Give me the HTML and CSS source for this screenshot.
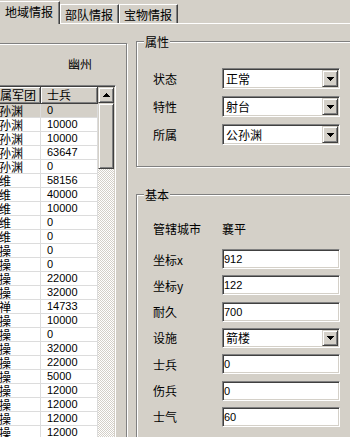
FILE: index.html
```html
<!DOCTYPE html>
<html lang="zh-CN">

<head>
    <meta charset="UTF-8">
    <title>地域情报</title>
    <link rel="stylesheet" href="styles.css">
</head>

<body>

    <div class="tabs">
        <div class="tab active">地域情报</div>
        <div class="tab">部队情报</div>
        <div class="tab">宝物情报</div>
    </div>

    <div class="panel">
        <div class="group region">
            <div class="region-name">幽州</div>
            <div class="list">
                <div class="list-main">
                    <div class="list-head">
                        <div class="col-army">所属军团</div>
                        <div class="col-troops">士兵</div>
                    </div>
                    <div class="list-row selected"><div class="col-army">公孙渊</div><div class="col-troops">0</div></div>
                    <div class="list-row"><div class="col-army">公孙渊</div><div class="col-troops">10000</div></div>
                    <div class="list-row"><div class="col-army">公孙渊</div><div class="col-troops">10000</div></div>
                    <div class="list-row"><div class="col-army">公孙渊</div><div class="col-troops">63647</div></div>
                    <div class="list-row"><div class="col-army">公孙渊</div><div class="col-troops">0</div></div>
                    <div class="list-row"><div class="col-army">姜维</div><div class="col-troops">58156</div></div>
                    <div class="list-row"><div class="col-army">姜维</div><div class="col-troops">40000</div></div>
                    <div class="list-row"><div class="col-army">姜维</div><div class="col-troops">10000</div></div>
                    <div class="list-row"><div class="col-army">姜维</div><div class="col-troops">0</div></div>
                    <div class="list-row"><div class="col-army">姜维</div><div class="col-troops">0</div></div>
                    <div class="list-row"><div class="col-army">曹操</div><div class="col-troops">0</div></div>
                    <div class="list-row"><div class="col-army">曹操</div><div class="col-troops">0</div></div>
                    <div class="list-row"><div class="col-army">曹操</div><div class="col-troops">22000</div></div>
                    <div class="list-row"><div class="col-army">曹操</div><div class="col-troops">32000</div></div>
                    <div class="list-row"><div class="col-army">刘禅</div><div class="col-troops">14733</div></div>
                    <div class="list-row"><div class="col-army">曹操</div><div class="col-troops">10000</div></div>
                    <div class="list-row"><div class="col-army">曹操</div><div class="col-troops">0</div></div>
                    <div class="list-row"><div class="col-army">曹操</div><div class="col-troops">32000</div></div>
                    <div class="list-row"><div class="col-army">曹操</div><div class="col-troops">22000</div></div>
                    <div class="list-row"><div class="col-army">曹操</div><div class="col-troops">5000</div></div>
                    <div class="list-row"><div class="col-army">曹操</div><div class="col-troops">12000</div></div>
                    <div class="list-row"><div class="col-army">曹操</div><div class="col-troops">12000</div></div>
                    <div class="list-row"><div class="col-army">曹操</div><div class="col-troops">12000</div></div>
                    <div class="list-row"><div class="col-army">曹操</div><div class="col-troops">12000</div></div>
                </div>
                <div class="vscroll">
                    <div class="sb-btn">
                        <svg width="7" height="4" shape-rendering="crispEdges"><path d="M3 0h1v1h1v1h1v1h1v1H0V3h1V2h1V1h1z"/></svg>
                    </div>
                    <div class="sb-thumb"></div>
                    <div class="sb-track"></div>
                </div>
            </div>
        </div>

        <div class="side">
            <div class="group">
                <div class="group-title">属性</div>
                <div class="fields attr">
                    <div class="field">
                        <span class="label">状态</span>
                        <div class="combo"><span class="combo-text">正常</span><span class="drop"><svg width="7" height="4" shape-rendering="crispEdges"><path d="M0 0h7v1H6v1H5v1H4v1H3V3H2V2H1V1H0z"/></svg></span></div>
                    </div>
                    <div class="field">
                        <span class="label">特性</span>
                        <div class="combo"><span class="combo-text">射台</span><span class="drop"><svg width="7" height="4" shape-rendering="crispEdges"><path d="M0 0h7v1H6v1H5v1H4v1H3V3H2V2H1V1H0z"/></svg></span></div>
                    </div>
                    <div class="field">
                        <span class="label">所属</span>
                        <div class="combo"><span class="combo-text">公孙渊</span><span class="drop"><svg width="7" height="4" shape-rendering="crispEdges"><path d="M0 0h7v1H6v1H5v1H4v1H3V3H2V2H1V1H0z"/></svg></span></div>
                    </div>
                </div>
            </div>

            <div class="group basic">
                <div class="group-title">基本</div>
                <div class="city">
                    <span class="label">管辖城市</span>
                    <span>襄平</span>
                </div>
                <div class="fields base">
                    <div class="field"><span class="label">坐标x</span><div class="edit">912</div></div>
                    <div class="field"><span class="label">坐标y</span><div class="edit">122</div></div>
                    <div class="field"><span class="label">耐久</span><div class="edit">700</div></div>
                    <div class="field">
                        <span class="label">设施</span>
                        <div class="combo"><span class="combo-text">箭楼</span><span class="drop"><svg width="7" height="4" shape-rendering="crispEdges"><path d="M0 0h7v1H6v1H5v1H4v1H3V3H2V2H1V1H0z"/></svg></span></div>
                    </div>
                    <div class="field"><span class="label">士兵</span><div class="edit">0</div></div>
                    <div class="field"><span class="label">伤兵</span><div class="edit">0</div></div>
                    <div class="field"><span class="label">士气</span><div class="edit">60</div></div>
                </div>
            </div>
        </div>
    </div>

</body>

</html>
```

FILE: styles.css
```css
html,
body {
    margin: 0;
    padding: 0;
    width: 350px;
    height: 437px;
    overflow: hidden;
}

body {
    background-color: #d4d0c8;
    color: #000;
    font-family: "Noto Sans CJK SC", sans-serif;
    font-size: 12px;
}

/* tab strip */
.tabs {
    display: flex;
    align-items: flex-end;
    height: 23px;
}

.tab {
    height: 18px;
    line-height: 20px;
    padding: 0 5px 0 4px;
    border: 1px solid;
    border-color: #fff #404040 transparent #fff;
    border-bottom: 0;
    box-shadow: inset -1px 0 #808080;
    white-space: nowrap;
}

.tab.active {
    position: relative;
    z-index: 1;
    height: 22px;
    margin: 0 0 -1px -1px;
    padding: 0 6px 0 5px;
    background-color: #d4d0c8;
}

.panel {
    display: flex;
    align-items: flex-start;
    width: 420px;
    margin-left: -40px;
    border-top: 1px solid #fff;
}

/* etched group box */
.group {
    border: 1px solid #808080;
    box-shadow: inset 1px 1px #fff, 1px 1px #fff;
}

.group-title {
    width: fit-content;
    margin: -7px 0 0 7px;
    padding: 0 1px;
    line-height: 14px;
    background-color: #d4d0c8;
}

.region {
    box-sizing: border-box;
    width: 167px;
    height: 420px;
    margin-top: 19px;
}

.region-name {
    margin-top: 13px;
    padding-left: 107px;
    line-height: 14px;
}

/* list view */
.list {
    display: flex;
    height: 360px;
    margin: 14px 10px 0 20px;
    padding: 1px;
    border: 1px solid;
    border-color: #808080 #fff #fff #808080;
    box-shadow: inset 1px 1px #404040, inset -1px -1px #d4d0c8;
}

.list-main {
    width: 115px;
    background-color: #fff;
}

.list-head,
.list-row {
    display: flex;
}

.list-head {
    height: 17px;
    line-height: 15px;
    background-color: #d4d0c8;
}

.list-head div {
    border-right: 1px solid #404040;
    border-bottom: 1px solid #404040;
    box-shadow: inset 1px 1px #fff, inset -1px -1px #808080;
}

.list-head .col-army {
    padding-left: 5px;
}

.list-row {
    height: 14px;
    line-height: 13px;
}

.list-row div {
    border-right: 1px solid #dcdcdc;
    border-bottom: 1px solid #dcdcdc;
}

.list-row.selected {
    background-color: #d4d0c8;
}

.col-army {
    box-sizing: border-box;
    width: 58px;
    padding-left: 4px;
    white-space: nowrap;
    overflow: hidden;
}

.col-troops {
    box-sizing: border-box;
    width: 57px;
    padding-left: 6px;
}

.list-row .col-troops {
    font-family: "Liberation Sans", Arial, sans-serif;
    font-size: 11px;
}

/* scroll bar */
.vscroll {
    display: flex;
    flex-direction: column;
    width: 16px;
}

.sb-btn,
.sb-thumb,
.drop {
    box-sizing: border-box;
    border: 1px solid;
    border-color: #d4d0c8 #404040 #404040 #d4d0c8;
    box-shadow: inset 1px 1px #fff, inset -1px -1px #808080;
    background-color: #d4d0c8;
}

.sb-btn {
    display: flex;
    align-items: center;
    justify-content: center;
    height: 16px;
}

.sb-thumb {
    height: 66px;
}

.sb-track {
    flex: 1;
    background: repeating-conic-gradient(#d4d0c8 0 25%, #fff 0 50%) 0 0 / 2px 2px;
}

svg {
    display: block;
}

/* right column */
.side {
    width: 240px;
    margin: 17px 0 0 9px;
}

.fields {
    display: flex;
    flex-direction: column;
    padding-left: 16px;
}

.fields.attr {
    gap: 7px;
    padding-top: 19px;
    padding-bottom: 21px;
}

.fields.base {
    gap: 6.33px;
    padding-top: 10px;
    padding-bottom: 20px;
}

.field {
    display: flex;
    align-items: center;
    height: 21px;
}

.fields.base .field {
    height: 20px;
}

.label {
    width: 69px;
    flex-shrink: 0;
}

.basic {
    margin-top: 27px;
}

.city {
    display: flex;
    margin-top: 17px;
    padding-left: 16px;
    line-height: 20px;
}

.combo,
.edit {
    box-sizing: border-box;
    width: 118px;
    height: 100%;
    padding: 1px;
    border: 1px solid;
    border-color: #808080 #fff #fff #808080;
    box-shadow: inset 1px 1px #404040, inset -1px -1px #d4d0c8;
    background-color: #fff;
}

.combo {
    display: flex;
}

.combo-text {
    flex: 1;
    padding-left: 2px;
    line-height: 17px;
}

.fields.base .combo-text {
    line-height: 16px;
}

.drop {
    display: flex;
    align-items: center;
    justify-content: center;
    width: 16px;
}

.edit {
    padding: 2px 1px 0;
    font-family: "Liberation Sans", Arial, sans-serif;
    font-size: 11px;
    line-height: 14px;
}
```
